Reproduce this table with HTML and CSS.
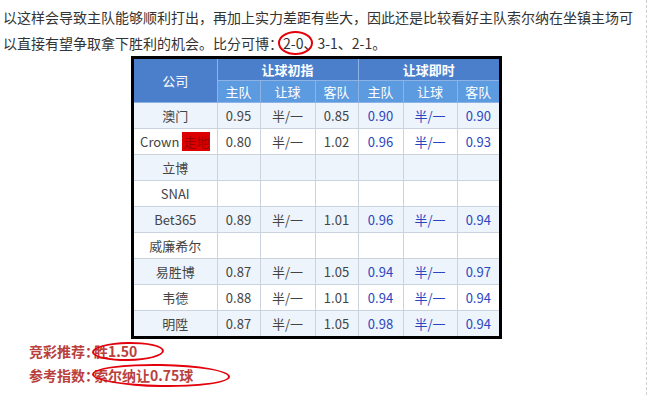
FILE: index.html
```html
<!DOCTYPE html>
<html lang="zh-CN">
<head>
<meta charset="utf-8">
<title>赔率</title>
<link rel="stylesheet" href="styles.css">
</head>
<body>
<div class="page">
  <p class="intro">以这样会导致主队能够顺利打出，再加上实力差距有些大，因此还是比较看好主队索尔纳在坐镇主场可以直接有望争取拿下胜利的机会。比分可博：<span class="mark">2-0、<i class="ring ring-score"></i></span>3-1、2-1。</p>
  <div class="odds-wrap">
    <table class="odds">
      <colgroup>
        <col class="c-co"><col class="c-h"><col class="c-r"><col class="c-a"><col class="c-h2"><col class="c-r2"><col class="c-a2">
      </colgroup>
      <thead>
        <tr class="h1">
          <th rowspan="2" class="co">公司</th>
          <th colspan="3" class="grp">让球初指</th>
          <th colspan="3" class="grp">让球即时</th>
        </tr>
        <tr class="h2">
          <th>主队</th><th>让球</th><th>客队</th>
          <th>主队</th><th>让球</th><th>客队</th>
        </tr>
      </thead>
      <tbody>
        <tr class="alt"><td>澳门</td><td>0.95</td><td>半/一</td><td>0.85</td><td class="now">0.90</td><td class="now">半/一</td><td class="now">0.90</td></tr>
        <tr><td>Crown <span class="live">走地</span></td><td>0.80</td><td>半/一</td><td>1.02</td><td class="now">0.96</td><td class="now">半/一</td><td class="now">0.93</td></tr>
        <tr class="alt"><td>立博</td><td></td><td></td><td></td><td></td><td></td><td></td></tr>
        <tr><td>SNAI</td><td></td><td></td><td></td><td></td><td></td><td></td></tr>
        <tr class="alt"><td>Bet365</td><td>0.89</td><td>半/一</td><td>1.01</td><td class="now">0.96</td><td class="now">半/一</td><td class="now">0.94</td></tr>
        <tr><td>威廉希尔</td><td></td><td></td><td></td><td></td><td></td><td></td></tr>
        <tr class="alt"><td>易胜博</td><td>0.87</td><td>半/一</td><td>1.05</td><td class="now">0.94</td><td class="now">半/一</td><td class="now">0.97</td></tr>
        <tr><td>韦德</td><td>0.88</td><td>半/一</td><td>1.01</td><td class="now">0.94</td><td class="now">半/一</td><td class="now">0.94</td></tr>
        <tr class="alt"><td>明陞</td><td>0.87</td><td>半/一</td><td>1.05</td><td class="now">0.98</td><td class="now">半/一</td><td class="now">0.94</td></tr>
      </tbody>
    </table>
  </div>
  <p class="tip"><span class="label">竞彩推荐：</span><span class="mark">胜1.50<i class="ring ring-win"></i></span></p>
  <p class="tip"><span class="label">参考指数：</span><span class="mark">索尔纳让0.75球<i class="ring ring-idx"></i></span></p>
</div>
</body>
</html>
```

FILE: styles.css
```css
html, body {
  margin: 0;
  padding: 0;
  background: #fff;
}
body {
  font-family: "Noto Sans CJK SC", "Noto Sans", "DejaVu Sans", sans-serif;
  color: #333;
}
.page {
  width: 647px;
  height: 395px;
  box-sizing: border-box;
  border-right: 1px dashed #cfcfcf;
  overflow: hidden;
}
.intro {
  margin: 0;
  padding: 4px 0 0 3px;
  width: 640px;
  font-size: 14px;
  line-height: 26px;
  color: #333;
}
.mark {
  position: relative;
  display: inline-block;
}
.ring {
  position: absolute;
  border: 2.5px solid #e3000b;
  border-radius: 50%;
  box-sizing: border-box;
  pointer-events: none;
}
.ring-score {
  left: -5px;
  top: 1px;
  width: 35px;
  height: 24px;
}
.ring-win {
  left: -2px;
  top: 3px;
  width: 72px;
  height: 19px;
  transform: rotate(-1deg);
}
.ring-idx {
  left: -2px;
  top: 1px;
  width: 138px;
  height: 23px;
  transform: rotate(1deg);
}
.odds-wrap {
  margin-left: 131px;
  width: 371px;
  border: 3px solid #000;
  box-sizing: border-box;
}
.odds {
  width: 365px;
  border-collapse: collapse;
  table-layout: fixed;
  font-size: 13px;
}
.c-co { width: 83px; }
.c-h { width: 43px; }
.c-r { width: 55px; }
.c-a { width: 43px; }
.c-h2 { width: 45px; }
.c-r2 { width: 54px; }
.c-a2 { width: 42px; }
.odds th {
  color: #fff;
  font-weight: normal;
  padding: 0;
  text-align: center;
  border: 1px solid #8db3e6;
}
.odds tr:first-child th { border-top: 0; }
.odds th:first-child { border-left: 0; }
.odds .h2 th:last-child, .odds .h1 th:last-child { border-right: 0; }
.odds .h1 th {
  height: 21px;
  background: #4b7fcb;
}
.odds .h1 .grp {
  font-weight: bold;
}
.odds .h2 th {
  height: 21px;
  background: #5d9be0;
}
.odds td {
  height: 25px;
  padding: 0;
  text-align: center;
  color: #444;
  border: 1px solid #cbd3de;
}
.odds td:first-child { border-left: 0; }
.odds td:last-child { border-right: 0; }
.odds tbody tr:last-child td { border-bottom: 0; }
.odds tr.alt td { background: #eef4fb; }
.odds td.now { color: #2a45c0; }
.live {
  background: #dc0000;
  color: #a00000;
  padding: 0 1px;
}
.tip {
  margin: 0;
  padding-left: 29px;
  font-size: 14px;
  line-height: 24px;
  font-weight: bold;
  color: #b9403c;
}
.tip:first-of-type { margin-top: 2px; }
.tip .label {
  font-feature-settings: "halt";
  margin-right: 2px;
}
```
